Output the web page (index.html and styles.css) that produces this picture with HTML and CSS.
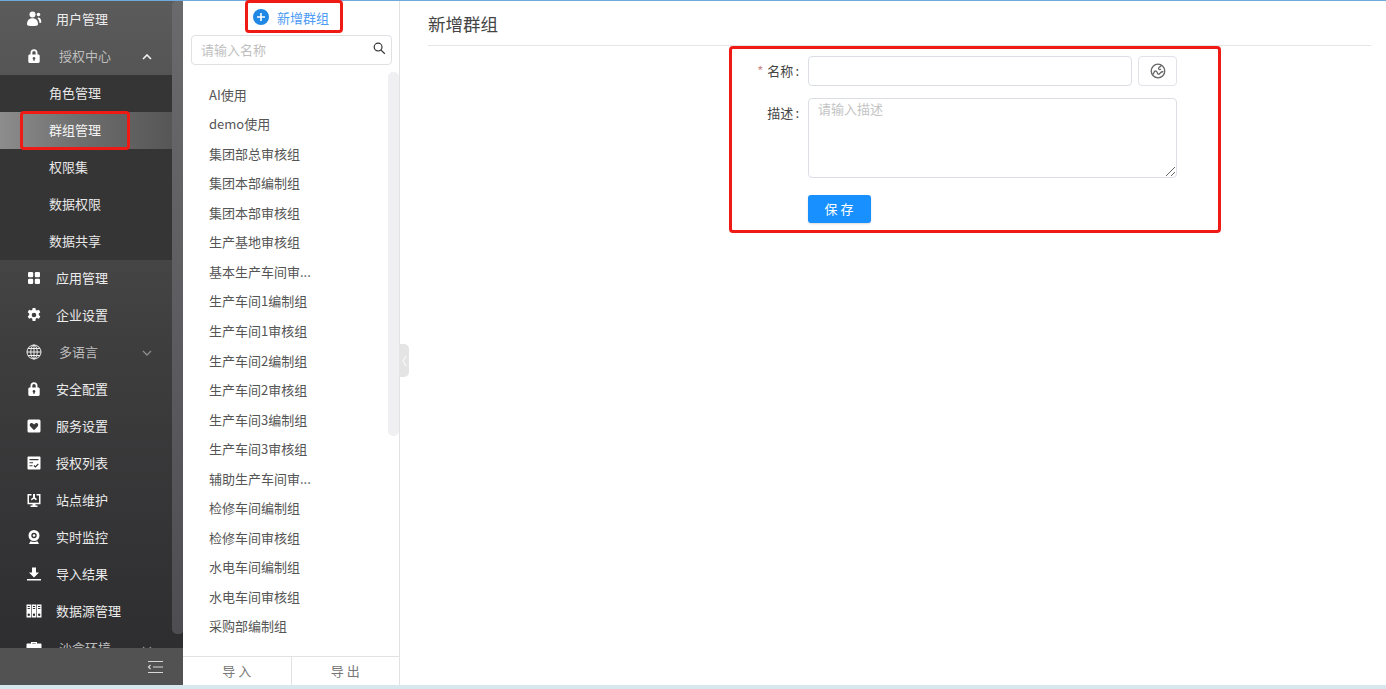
FILE: index.html
```html
<!DOCTYPE html>
<html lang="zh-CN">
<head>
<meta charset="utf-8">
<title>新增群组</title>
<link rel="stylesheet" href="styles.css">
</head>
<body>
<div class="app">
  <aside class="sidebar">
    <nav class="menu">
      <a class="item"><svg class="ico" viewBox="0 0 16 16"><circle cx="6.500" cy="3.600" r="3"/><path d="M1 13.500c0-4 2-6.200 5.500-6.200s5.500 2.200 5.500 6.200c0 1-2.500 1.500-5.500 1.500S1 14.500 1 13.500z"/><circle cx="12.500" cy="3.500" r="1.800"/><path d="M12.500 6.500c2 .3 2.800 2.300 2.800 4.500 0 .8-.8 1-1.800 1.100-.2-2-.8-3.700-2-4.800.4-.3.700-.6 1-.8z"/></svg><span>用户管理</span></a>
      <a class="item parent"><svg class="ico" viewBox="0 0 16 16"><path fill-rule="evenodd" d="M4.500 6.500V4.700a3.500 3.500 0 0 1 7 0v1.800h.8c.9 0 1.400.6 1.400 1.400v5.700c0 .9-.5 1.400-1.400 1.400H3.700c-.9 0-1.400-.5-1.400-1.400V7.900c0-.8.5-1.400 1.400-1.400zm1.800 0h3.400V4.700a1.700 1.700 0 0 0-3.400 0zM8 9a1.400 1.400 0 0 0-.7 2.600v1.200h1.400v-1.200A1.400 1.400 0 0 0 8 9z"/></svg><span>授权中心</span><svg class="chev up" viewBox="0 0 10 6"><path d="M1 5l4-4 4 4"/></svg></a>
      <div class="sub">
        <a class="sub-item">角色管理</a>
        <a class="sub-item active">群组管理</a>
        <a class="sub-item">权限集</a>
        <a class="sub-item">数据权限</a>
        <a class="sub-item">数据共享</a>
      </div>
      <a class="item"><svg class="ico" viewBox="0 0 16 16"><rect x="2" y="2" width="5.200" height="5.200" rx="1.200"/><rect x="8.800" y="2" width="5.200" height="5.200" rx="1.200"/><rect x="2" y="8.800" width="5.200" height="5.200" rx="1.200"/><rect x="8.800" y="8.800" width="5.200" height="5.200" rx="1.200"/></svg><span>应用管理</span></a>
      <a class="item"><svg class="ico" viewBox="0 0 16 16"><path fill-rule="evenodd" d="M6.600 1h2.800l.4 2 1.200.6 1.900-.8 1.400 2.400-1.500 1.400v1.400l1.500 1.400-1.400 2.400-1.900-.8-1.200.6-.4 2.300H6.600l-.4-2.300-1.200-.6-1.900.8-1.400-2.400 1.500-1.400V6.600L1.700 5.200l1.400-2.400 1.900.8 1.200-.6zM8 5.700a2.300 2.300 0 1 0 0 4.600 2.300 2.300 0 0 0 0-4.600z"/></svg><span>企业设置</span></a>
      <a class="item parent"><svg class="ico line" viewBox="0 0 16 16"><circle cx="8" cy="8" r="7"/><ellipse cx="8" cy="8" rx="3.200" ry="7"/><path d="M1 8h14M2 4.500h12M2 11.500h12M8 1v14"/></svg><span>多语言</span><svg class="chev" viewBox="0 0 10 6"><path d="M1 1l4 4 4-4"/></svg></a>
      <a class="item"><svg class="ico" viewBox="0 0 16 16"><path fill-rule="evenodd" d="M4.500 6.500V4.700a3.500 3.500 0 0 1 7 0v1.800h.8c.9 0 1.400.6 1.400 1.400v5.700c0 .9-.5 1.400-1.400 1.400H3.700c-.9 0-1.400-.5-1.400-1.400V7.900c0-.8.5-1.400 1.400-1.400zm1.800 0h3.400V4.700a1.700 1.700 0 0 0-3.400 0zM8 9a1.400 1.400 0 0 0-.7 2.600v1.200h1.400v-1.200A1.400 1.400 0 0 0 8 9z"/></svg><span>安全配置</span></a>
      <a class="item"><svg class="ico" viewBox="0 0 16 16"><path fill-rule="evenodd" d="M3 1.500h10A1.500 1.500 0 0 1 14.500 3v10a1.500 1.500 0 0 1-1.500 1.500H3A1.500 1.500 0 0 1 1.500 13V3A1.500 1.500 0 0 1 3 1.500zM8 12.300l3.600-3.700c1.900-2-.6-4.700-2.600-3L8 6.500l-1-.9c-2-1.700-4.500 1-2.600 3z"/></svg><span>服务设置</span></a>
      <a class="item"><svg class="ico" viewBox="0 0 16 16"><path fill-rule="evenodd" d="M2.500 1.500h11c.6 0 1 .4 1 1v11c0 .6-.4 1-1 1h-11c-.6 0-1-.4-1-1v-11c0-.6.4-1 1-1zM3.500 4v1.200h9V4zm0 3.300v1h3.500v-1zm0 3v1h3v-1zm4.800-.2l-.8.800 1.900 1.800 3.300-3.300-.8-.8-2.500 2.500z"/></svg><span>授权列表</span></a>
      <a class="item"><svg class="ico" viewBox="0 0 16 16"><path fill-rule="evenodd" d="M1.500 2h4v1.500H3v7.300h10V3.500h-2.500V2h4v10.300h-5v1.200h2V15h-7v-1.500h2v-1.200h-5z"/><path d="M7 2h2v3.500l2 1.500-1 1.200L7.800 6.800 5.500 8.500 5 7l2-1.500z"/></svg><span>站点维护</span></a>
      <a class="item"><svg class="ico" viewBox="0 0 16 16"><path fill-rule="evenodd" d="M8 1a5.500 5.500 0 1 1 0 11A5.500 5.500 0 0 1 8 1zm0 2.800a2.700 2.700 0 1 0 0 5.400 2.700 2.700 0 0 0 0-5.400z"/><circle cx="8" cy="6.500" r="1.300"/><path d="M4.500 12.300c2 1 5 1 7 0l1.500 2.700H3z"/></svg><span>实时监控</span></a>
      <a class="item"><svg class="ico" viewBox="0 0 16 16"><path d="M6 1.500h4v5h3L8 11.500 3 6.500h3z"/><rect x="1" y="13" width="14" height="1.500"/></svg><span>导入结果</span></a>
      <a class="item"><svg class="ico" viewBox="0 0 16 16"><path fill-rule="evenodd" d="M.5 1.500h4.600v13H.5zm5.200 0h4.600v13H5.700zm5.200 0h4.600v13h-4.600zM1.700 3v1h2.200V3zm0 2v1h2.200V5zm5.200-2v1h2.200V3zm0 2v1h2.200V5zm5.200-2v1h2.200V3zm0 2v1h2.200V5zM2.800 10.500a1.200 1.200 0 1 0 0 2.400 1.200 1.200 0 0 0 0-2.400zm5.200 0a1.200 1.200 0 1 0 0 2.400 1.200 1.200 0 0 0 0-2.400zm5.200 0a1.200 1.200 0 1 0 0 2.400 1.200 1.200 0 0 0 0-2.400z"/></svg><span>数据源管理</span></a>
      <a class="item parent"><svg class="ico" viewBox="0 0 16 16"><path fill-rule="evenodd" d="M5 3.500V2h6v1.500h3.500c.6 0 1 .4 1 1V8H.5V4.500c0-.6.4-1 1-1zm1.300 0h3.400V3H6.300zM.5 9h15v4.500c0 .6-.4 1-1 1h-13c-.6 0-1-.4-1-1z"/></svg><span>沙盒环境</span><svg class="chev" viewBox="0 0 10 6"><path d="M1 1l4 4 4-4"/></svg></a>
    </nav>
    <div class="side-thumb"></div>
    <div class="side-foot">
      <svg class="fold" viewBox="0 0 16 14"><path d="M1 1.500h15M6 7h10M1 12.500h15M3.500 5L1.500 7l2 2"/></svg>
    </div>
  </aside>

  <section class="groups">
    <div class="add-row">
      <button class="add-btn" type="button">
        <svg class="plus" viewBox="0 0 16 16"><circle cx="8" cy="8" r="8"/><path d="M8 4v8M4 8h8"/></svg>
        <span>新增群组</span>
      </button>
    </div>
    <div class="search">
      <span class="search-ph">请输入名称</span>
      <svg class="search-ico" viewBox="0 0 14 14"><circle cx="5.500" cy="5.500" r="4.200"/><path d="M8.700 8.700l4 4"/></svg>
    </div>
    <ul class="group-list">
      <li>AI使用</li>
      <li>demo使用</li>
      <li>集团部总审核组</li>
      <li>集团本部编制组</li>
      <li>集团本部审核组</li>
      <li>生产基地审核组</li>
      <li>基本生产车间审...</li>
      <li>生产车间1编制组</li>
      <li>生产车间1审核组</li>
      <li>生产车间2编制组</li>
      <li>生产车间2审核组</li>
      <li>生产车间3编制组</li>
      <li>生产车间3审核组</li>
      <li>辅助生产车间审...</li>
      <li>检修车间编制组</li>
      <li>检修车间审核组</li>
      <li>水电车间编制组</li>
      <li>水电车间审核组</li>
      <li>采购部编制组</li>
    </ul>
    <div class="list-thumb"></div>
    <div class="group-foot">
      <button class="foot-btn" type="button">导 入</button>
      <button class="foot-btn" type="button">导 出</button>
    </div>
    <div class="handle"><svg viewBox="0 0 6 14"><path d="M5 1L1 7l4 6"/></svg></div>
  </section>

  <main class="content">
    <h1 class="title">新增群组</h1>
    <form class="form">
      <div class="row">
        <label class="label"><i class="req">*</i>名称<i class="colon">:</i></label>
        <div class="field name-field">
          <div class="input"></div>
          <button class="globe-btn" type="button"><svg viewBox="0 0 16 16"><circle cx="8" cy="8" r="6.800"/><path d="M2.300 11.500c1-.4 1.500-1.300 1.800-2.300.3-1 1.300-1.500 2.200-1 .9.500 1 1.500 1.300 2.300.3.800 1.300 1 2 .3.600-.7 1.200-2.200 3.800-2.300M11.300 2.200c-.4 1.300-1.600 1.600-2.400 2.400-.6.600-.4 1.600.4 1.900.7.200 1.200-.2 1.700-.6"/></svg></button>
        </div>
      </div>
      <div class="row">
        <label class="label desc-label">描述<i class="colon">:</i></label>
        <div class="textarea">
          <span class="ta-ph">请输入描述</span>
          <svg class="grip" viewBox="0 0 9 9"><path d="M0 9l9-9M5 9l4-4"/></svg>
        </div>
      </div>
      <div class="row">
        <span class="label"></span>
        <button class="save" type="button">保 存</button>
      </div>
    </form>
  </main>
</div>
<div class="mark mark-menu"></div>
<div class="mark mark-add"></div>
<div class="mark mark-form"></div>
</body>
</html>
```
FILE: styles.css
```css
* { box-sizing: border-box; }
html, body { margin: 0; height: 100%; overflow: hidden; }
body {
  position: relative;
  background: #d6e8ee;
  font-family: "Noto Sans CJK SC", "Noto Sans", sans-serif;
  font-size: 13px;
  color: #444;
}
a { display: block; }
button { font-family: inherit; cursor: pointer; }

.app {
  display: flex;
  height: 685px;
  border-top: 1px solid #6fa8dc;
  background: #fff;
}

/* Sidebar */
.sidebar {
  position: relative;
  flex: 0 0 183px;
  display: flex;
  flex-direction: column;
  background: linear-gradient(180deg, #5b5b5b 0%, #3e3e3f 50%, #2c2c2e 100%);
}
.menu {
  flex: 1;
  min-height: 0;
  overflow: hidden;
  padding-right: 11px;
}
.item {
  height: 37px;
  display: flex;
  align-items: center;
  padding-left: 26px;
  color: #ececec;
}
.item span { margin: -2px 0 0 14px; white-space: nowrap; }
.parent span { margin-left: 17px; color: #bdbdbd; flex: 1; }
.ico { width: 16px; height: 16px; margin-top: -1px; fill: #fff; flex: none; }
.ico.line { fill: none; stroke: #eee; stroke-width: 1; }
.chev {
  width: 10px;
  height: 6px;
  margin-right: 20px;
  fill: none;
  stroke: #8c8c8c;
  stroke-width: 1.300;
}
.chev.up { stroke: #f2f2f2; stroke-width: 1.600; }
.sub { background: #353535; }
.sub-item {
  height: 37px;
  line-height: 35px;
  padding-left: 49px;
  color: #e8e8e8;
}
.sub-item.active {
  background: linear-gradient(90deg, #8d8d8d 0%, #6f6f6f 45%, #565656 100%);
  color: #f4f4f4;
}
.side-thumb {
  position: absolute;
  top: 0;
  right: 0;
  width: 11px;
  height: 633px;
  border-radius: 4px 0 4px 5px;
  background: linear-gradient(180deg, #6a6a6c 0%, #5d5d61 50%, #4e4e52 100%);
}
.side-foot {
  flex: 0 0 37px;
  display: flex;
  align-items: center;
  justify-content: flex-end;
  padding-right: 20px;
  background: #525252;
}
.fold {
  width: 16px;
  height: 14px;
  fill: none;
  stroke: #d8d8d8;
  stroke-width: 1.200;
}

/* Group list */
.groups {
  position: relative;
  flex: 0 0 217px;
  display: flex;
  flex-direction: column;
  border-right: 1px solid #e2e2e2;
}
.add-row {
  height: 34px;
  display: flex;
  justify-content: center;
}
.add-btn {
  display: flex;
  align-items: center;
  gap: 8px;
  height: 34px;
  padding: 0 0 1px;
  border: 0;
  background: none;
  color: #4c9bf5;
  font-size: 13px;
}
.plus { width: 16px; height: 16px; margin-top: -2px; }
.plus circle { fill: #1f88e5; }
.plus path { stroke: #fff; stroke-width: 1.600; fill: none; }
.search {
  height: 30px;
  margin: 0 7px 0 8px;
  padding: 0 10px 2px 9px;
  display: flex;
  align-items: center;
  justify-content: space-between;
  border: 1px solid #dfe1e5;
  border-radius: 4px;
}
.search-ph { color: #bfbfbf; font-size: 13px; }
.search-ico {
  width: 13px;
  height: 13px;
  margin-right: -5px;
  margin-top: -1px;
  fill: none;
  stroke: #333;
  stroke-width: 1.300;
}
.group-list {
  list-style: none;
  flex: 1;
  min-height: 0;
  margin: 0;
  padding: 14.600px 0 0 26px;
  overflow: hidden;
}
.group-list li {
  height: 29.560px;
  line-height: 29.560px;
  color: #555;
  white-space: nowrap;
}
.list-thumb {
  position: absolute;
  top: 71px;
  right: 0;
  width: 11px;
  height: 364px;
  border-radius: 5px;
  background: #f0f0f3;
}
.group-foot {
  flex: 0 0 29px;
  display: flex;
  border-top: 1px solid #e2e2e2;
}
.foot-btn {
  flex: 1;
  border: 0;
  border-right: 1px solid #e2e2e2;
  background: #fff;
  color: #777;
  font-size: 13px;
  padding: 0 0 2px;
}
.foot-btn:last-child { border-right: 0; }
.handle {
  position: absolute;
  top: 343px;
  left: 216px;
  width: 10px;
  height: 33px;
  display: flex;
  align-items: center;
  justify-content: center;
  border-radius: 0 5px 5px 0;
  background: #e4e4e4;
}
.handle svg {
  width: 5px;
  height: 12px;
  fill: none;
  stroke: #fff;
  stroke-width: 1.200;
}

/* Content */
.content {
  flex: 1;
  min-width: 0;
  padding: 0 15px 0 28px;
}
.title {
  height: 45px;
  margin: 0;
  border-bottom: 1px solid #e5e5e5;
  color: #444;
  font-size: 17.500px;
  font-weight: 400;
  line-height: 45px;
}
.form {
  display: flex;
  flex-direction: column;
  width: 469px;
  margin: 10px 0 0 280px;
}
.row { display: flex; margin-bottom: 12px; }
.row:nth-child(2) { margin-bottom: 17px; }
.label {
  flex: 0 0 100px;
  padding-right: 8px;
  line-height: 30px;
  text-align: right;
  color: #444;
}
.colon { margin-left: 2px; padding-right: 1px; font-style: normal; }
.desc-label { line-height: 29px; }
.req { margin-right: 4px; color: #c88; font-style: normal; }
.field { flex: 1; display: flex; gap: 6px; }
.input {
  flex: 1;
  height: 30px;
  border: 1px solid #dcdee6;
  border-radius: 4px;
}
.globe-btn {
  width: 39px;
  height: 30px;
  padding: 0;
  display: flex;
  align-items: center;
  justify-content: center;
  border: 1px solid #e2e3e8;
  border-radius: 4px;
  background: #fff;
}
.globe-btn svg {
  width: 16px;
  height: 16px;
  fill: none;
  stroke: #666;
  stroke-width: 1.300;
}
.textarea {
  position: relative;
  flex: 1;
  height: 80px;
  padding: 0 9px;
  border: 1px solid #dcdee6;
  border-radius: 4px;
  color: #c4c4c4;
  line-height: 20px;
}
.grip {
  position: absolute;
  right: 1px;
  bottom: 1px;
  width: 9px;
  height: 9px;
  stroke: #666;
  stroke-width: 1;
}
.save {
  width: 63px;
  height: 28px;
  padding: 0 1px 2px 0;
  border: 0;
  border-radius: 3px;
  background: #1890ff;
  box-shadow: 0 1px 2px rgba(0, 0, 0, .15);
  color: #fff;
  font-size: 13px;
}

/* Red annotations drawn over the screenshot */
.mark {
  position: absolute;
  border: 3px solid #f01a14;
  border-radius: 4px;
  pointer-events: none;
}
.mark-menu { left: 20px; top: 111px; width: 110px; height: 39px; }
.mark-add { left: 245px; top: 0; width: 98px; height: 33px; }
.mark-form { left: 729px; top: 46px; width: 492px; height: 187px; }
```
